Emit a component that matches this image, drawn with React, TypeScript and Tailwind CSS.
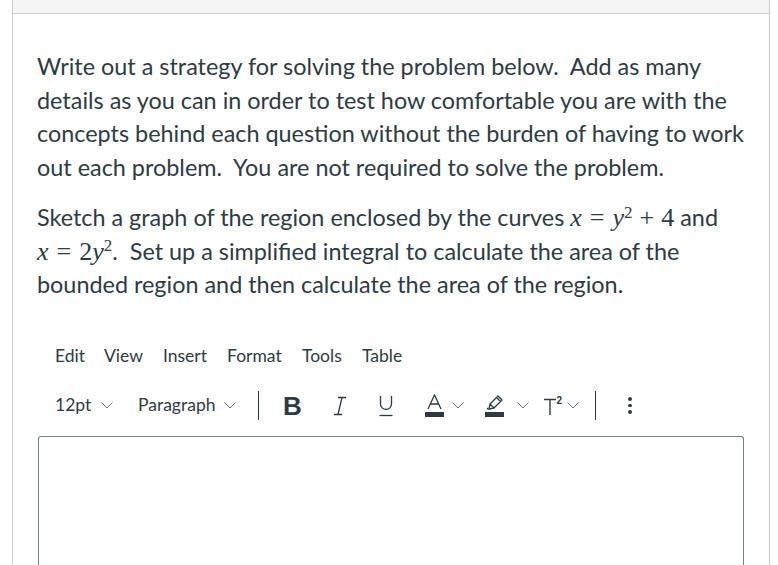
import React from "react";

const Chevron = ({ ml }: { ml: string }) => (
  <svg width="12" height="7" viewBox="0 0 12 7" className={`${ml} shrink-0`} fill="none" stroke="#6b7780" strokeWidth="1">
    <path d="M0.5 0.5 L6 6 L11.5 0.5" />
  </svg>
);

const serif = { fontFamily: '"Liberation Serif", "DejaVu Serif", serif' };

const Mi = ({ children }: { children: React.ReactNode }) => (
  <span className="italic" style={serif}>{children}</span>
);
const Mn = ({ children, cls = "" }: { children: React.ReactNode; cls?: string }) => (
  <span className={cls} style={serif}>{children}</span>
);

export default function App() {
  return (
    <div className="w-[778px] h-[565px] bg-white overflow-hidden" style={{ fontFamily: 'Lato, "Liberation Sans", sans-serif' }}>
      <div className="ml-[12px] w-[758px] h-[565px] border-l border-r border-[#c7cdd1] flex flex-col">
        <div className="h-[14px] bg-[#f5f5f5] border-b border-[#c7cdd1] shrink-0" />
        <div className="pl-[24px] pr-[22px] pt-[36px] text-[#2d3b45] text-[23.4px] leading-[33.5px]">
          <p className="whitespace-pre-wrap">
            Write out a strategy for solving the problem below.  Add as many details as you can in order to test how comfortable you are with the concepts behind each question without the burden of having to work out each problem.  You are not required to solve the problem.
          </p>
          <p className="mt-[17px] whitespace-pre-wrap">
            Sketch a graph of the region enclosed by the curves{" "}
            <span className="text-[26px] leading-[20px] whitespace-nowrap">
              <Mi>x</Mi>
              <Mn cls="mx-[8px]">=</Mn>
              <Mi>y</Mi>
              <sup className="text-[17px]"><Mn>2</Mn></sup>
              <Mn cls="mx-[7px]">+</Mn>
              <Mn>4</Mn>
            </span>{" "}
            and{" "}
            <span className="text-[26px] leading-[20px] whitespace-nowrap">
              <Mi>x</Mi>
              <Mn cls="mx-[8px]">=</Mn>
              <Mn>2</Mn>
              <Mi>y</Mi>
              <sup className="text-[17px]"><Mn>2</Mn></sup>
            </span>
            .  Set up a simplified integral to calculate the area of the bounded region and then calculate the area of the region.
          </p>
        </div>
        <div className="pl-[42px] mt-[43px] flex text-[17.5px] text-[#2d3b45] leading-[22px]">
          <span className="w-[29px] min-w-0 whitespace-nowrap">Edit</span>
          <span className="ml-[20px] w-[39px] min-w-0 whitespace-nowrap">View</span>
          <span className="ml-[20px] w-[44px] min-w-0 whitespace-nowrap">Insert</span>
          <span className="ml-[20px] w-[55px] min-w-0 whitespace-nowrap">Format</span>
          <span className="ml-[20px] w-[40px] min-w-0 whitespace-nowrap">Tools</span>
          <span className="ml-[20px] w-[40px] min-w-0 whitespace-nowrap">Table</span>
        </div>
        <div className="pl-[42px] mt-[24px] h-[30px] flex items-center text-[17.5px] text-[#2d3b45]">
          <span className="w-[38px] min-w-0 shrink-0 whitespace-nowrap">12pt</span>
          <Chevron ml="ml-[8px]" />
          <span className="ml-[25px] w-[77px] min-w-0 shrink-0 whitespace-nowrap">Paragraph</span>
          <Chevron ml="ml-[9px]" />
          <div className="ml-[22px] w-px h-[29px] bg-[#2d3b45] shrink-0" />
          <span className="ml-[24px] w-[17px] min-w-0 shrink-0 text-[26px] font-bold leading-none" style={{ fontFamily: '"Liberation Sans", Arial, sans-serif' }}>B</span>
          <svg className="ml-[33px] shrink-0" width="14" height="20" viewBox="0 0 14 20" fill="none" stroke="#2d3b45" strokeWidth="1.3">
            <path d="M5 1.5 H13 M1 18.5 H9 M9 1.5 L5 18.5" />
          </svg>
          <svg className="ml-[32px] shrink-0" width="14" height="22" viewBox="0 0 14 22" fill="none" stroke="#2d3b45" strokeWidth="1.3">
            <path d="M1.5 1 V9 a5.5 5.5 0 0 0 11 0 V1" />
            <path d="M0.5 20.5 H13.5" />
          </svg>
          <svg className="ml-[32px] shrink-0" width="19" height="23" viewBox="0 0 19 23" fill="none">
            <path d="M3 15 L9.5 1 L16 15 M5.3 10 H13.7" stroke="#2d3b45" strokeWidth="1.3" />
            <rect x="0" y="18" width="19" height="5" fill="#2d3b45" />
          </svg>
          <Chevron ml="ml-[8px]" />
          <svg className="ml-[21px] shrink-0" width="19" height="23" viewBox="0 0 19 23" fill="none">
            <path d="M13 2 L17 6 L9 14 L4 15 L5 10 Z M11.5 3.5 L15.5 7.5 M5 10 L9 14" stroke="#2d3b45" strokeWidth="1.3" strokeLinejoin="round" />
            <path d="M2 14 L3.5 15.5" stroke="#2d3b45" strokeWidth="1.2" />
            <rect x="0" y="18" width="19" height="5" fill="#2d3b45" />
          </svg>
          <Chevron ml="ml-[13px]" />
          <svg className="ml-[14px] shrink-0" width="20" height="20" viewBox="0 0 20 20" fill="none">
            <path d="M1 3.5 H13 M7 3.5 V19" stroke="#2d3b45" strokeWidth="1.4" />
            <text x="13.5" y="8" fontSize="10" fontWeight="bold" fill="#2d3b45" style={{ fontFamily: '"Liberation Sans", Arial, sans-serif' }}>2</text>
          </svg>
          <Chevron ml="ml-[4px]" />
          <div className="ml-[16px] w-px h-[29px] bg-[#2d3b45] shrink-0" />
          <div className="ml-[32px] flex flex-col gap-[3px] shrink-0">
            <span className="w-[3.5px] h-[3.5px] rounded-full bg-[#2d3b45]" />
            <span className="w-[3.5px] h-[3.5px] rounded-full bg-[#2d3b45]" />
            <span className="w-[3.5px] h-[3.5px] rounded-full bg-[#2d3b45]" />
          </div>
        </div>
        <div className="ml-[25px] mt-[15px] w-[706px] flex-1 border border-[#73818c] rounded-[3px] border-b-0 rounded-b-none" />
      </div>
    </div>
  );
}
